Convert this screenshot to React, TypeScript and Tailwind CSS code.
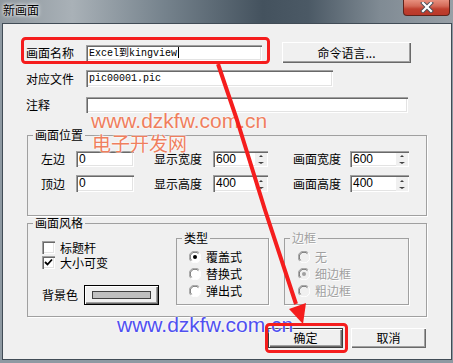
import React from 'react';

const cjk = { fontFamily: '"Noto Sans CJK SC", "Noto Sans", sans-serif' };
const mono = { fontFamily: '"Liberation Mono", monospace' };
const sans = { fontFamily: '"Liberation Sans", Arial, sans-serif' };

const sunken =
  'bg-white shadow-[inset_1px_1px_0_#a0a0a0,inset_2px_2px_0_#696969,inset_-1px_-1px_0_#ffffff,inset_-2px_-2px_0_#e3e3e3]';
const raised =
  'bg-[#f0f0f0] shadow-[inset_1px_1px_0_#ffffff,inset_-1px_-1px_0_#696969,inset_-2px_-2px_0_#a0a0a0]';

function Label({ text, w }: { text: string; w: string }) {
  return (
    <span className={`${w} shrink-0 text-[12px] leading-[14px] text-black`} style={cjk}>
      {text}
    </span>
  );
}

function Spin({ value, w }: { value: string; w: string }) {
  return (
    <div className={`${w} h-full flex ${sunken}`}>
      <span className="flex-1 pl-[3px] pt-[2px] text-[12px] leading-[13px] text-black" style={sans}>
        {value}
      </span>
      <div className="w-[12px] mt-[2px] mb-[1px] mr-[1px] flex flex-col bg-[#f0f0f0]">
        <div className="flex-1 flex items-center justify-center">
          <div className="w-0 h-0 border-x-[2px] border-x-transparent border-b-[2px] border-b-[#404040]" />
        </div>
        <div className="flex-1 flex items-center justify-center">
          <div className="w-0 h-0 border-x-[3px] border-x-transparent border-t-[2px] border-t-[#404040]" />
        </div>
      </div>
    </div>
  );
}

function Check({ label, checked }: { label: string; checked?: boolean }) {
  return (
    <div className="flex items-center h-[13px]">
      <div className={`w-[13px] h-[13px] ${sunken} flex items-center justify-center`}>
        {checked && (
          <svg width="9" height="9" viewBox="0 0 9 9">
            <path d="M1 4 L3.5 6.5 L8 1.5" stroke="#000" strokeWidth="1.8" fill="none" />
          </svg>
        )}
      </div>
      <span className="ml-[5px] text-[12px] leading-[13px]" style={cjk}>
        {label}
      </span>
    </div>
  );
}

function Radio({ label, on, disabled }: { label: string; on?: boolean; disabled?: boolean }) {
  return (
    <div className="flex items-center h-[16px]">
      <svg width="12" height="12" viewBox="0 0 12 12">
        <circle cx="6" cy="6" r="5.5" fill={disabled ? '#f0f0f0' : '#ffffff'} />
        <path d="M1.8 10.2 A5.5 5.5 0 0 1 10.2 1.8" stroke="#a0a0a0" strokeWidth="1" fill="none" />
        <path d="M2.6 9.4 A4.5 4.5 0 0 1 9.4 2.6" stroke="#696969" strokeWidth="1" fill="none" />
        <path d="M10.2 1.8 A5.5 5.5 0 0 1 1.8 10.2" stroke="#ffffff" strokeWidth="1" fill="none" />
        {on && <circle cx="6" cy="6" r="2" fill={disabled ? '#a0a0a0' : '#000000'} />}
      </svg>
      <span
        className={`ml-[5px] text-[12px] leading-[14px] ${
          disabled ? 'text-[#a0a0a0] [text-shadow:1px_1px_0_#ffffff]' : 'text-black'
        }`}
        style={cjk}
      >
        {label}
      </span>
    </div>
  );
}

function Group({
  title,
  className,
  disabled,
  children,
}: {
  title: string;
  className: string;
  disabled?: boolean;
  children: React.ReactNode;
}) {
  return (
    <fieldset className={`${className} border border-[#a0a0a0] shadow-[1px_1px_0_#ffffff]`}>
      <legend
        className={`ml-[5px] px-[2px] text-[12px] leading-[14px] ${
          disabled ? 'text-[#a0a0a0] [text-shadow:1px_1px_0_#ffffff]' : 'text-black'
        }`}
        style={cjk}
      >
        {title}
      </legend>
      {children}
    </fieldset>
  );
}

export default function App() {
  return (
    <div className="relative w-[453px] h-[363px] overflow-hidden bg-[#8e99a2] flex flex-col">
      {/* title bar */}
      <div className="h-[23px] shrink-0 flex items-start justify-between bg-[linear-gradient(to_right,#8f989f_0%,#a9b1b7_16%,#76838d_36%,#44525e_58%,#4b5965_68%,#808b94_84%,#979fa6_100%)]">
        <span
          className="ml-[3px] mt-[3px] text-[12px] leading-[14px] text-black [text-shadow:0_0_5px_#ffffff,0_0_3px_#ffffff]"
          style={cjk}
        >
          新画面
        </span>
        <div className="mr-[3px] w-[47px] h-[16px] rounded-b-[4px] border border-t-0 border-[#5e231b] bg-[linear-gradient(to_bottom,#e7907f_0%,#d46a58_40%,#c0402f_60%,#b9382a_100%)] flex items-center justify-center">
          <svg width="14" height="11" viewBox="0 0 14 11">
            <path d="M3 1 L11 9 M11 1 L3 9" stroke="#4a4f58" strokeWidth="4" strokeLinecap="square" />
            <path d="M3 1 L11 9 M11 1 L3 9" stroke="#ffffff" strokeWidth="2.2" strokeLinecap="square" />
          </svg>
        </div>
      </div>

      {/* client area */}
      <div className="ml-[2px] w-[450px] h-[337px] shrink-0 border border-[#414c56] bg-[#f0f0f0] flex flex-col">
        <div className="mt-[18px] pl-[23px] h-[21px] flex items-center">
          <Label text="画面名称" w="w-[60px]" />
          <div className={`w-[176px] h-[16px] ${sunken} flex items-center pl-[3px]`}>
            <span className="text-[10px] leading-[12px] text-black" style={mono}>
              Excel<span style={cjk}>到</span>kingview
            </span>
            <span className="ml-[1px] w-[1px] h-[11px] bg-black" />
          </div>
          <button
            className={`ml-[20px] w-[129px] h-[21px] ${raised} text-[12px] leading-[14px] text-black`}
            style={cjk}
          >
            命令语言...
          </button>
        </div>

        <div className="mt-[7px] pl-[23px] h-[17px] flex items-center">
          <Label text="对应文件" w="w-[60px]" />
          <div className={`w-[247px] h-[17px] ${sunken} flex items-center pl-[3px]`}>
            <span className="text-[10px] leading-[12px] text-black" style={mono}>
              pic00001.pic
            </span>
          </div>
        </div>

        <div className="mt-[10px] pl-[23px] h-[16px] flex items-center">
          <Label text="注释" w="w-[60px]" />
          <div className={`w-[322px] h-[16px] ${sunken}`} />
        </div>

        <Group title="画面位置" className="mt-[15px] ml-[24px] w-[400px] h-[88px]">
          <div className="mt-[9px] pl-[13px] h-[16px] flex items-center">
            <Label text="左边" w="w-[35px]" />
            <div className={`w-[58px] h-full ${sunken} pl-[3px] pt-[2px] text-[12px] leading-[13px]`} style={sans}>
              0
            </div>
            <span className="w-[20px]" />
            <Label text="显示宽度" w="w-[59px]" />
            <Spin value="600" w="w-[55px]" />
            <span className="w-[25px]" />
            <Label text="画面宽度" w="w-[57px]" />
            <Spin value="600" w="w-[59px]" />
          </div>
          <div className="mt-[8px] pl-[13px] h-[17px] flex items-center">
            <Label text="顶边" w="w-[35px]" />
            <div className={`w-[58px] h-full ${sunken} pl-[3px] pt-[2px] text-[12px] leading-[13px]`} style={sans}>
              0
            </div>
            <span className="w-[20px]" />
            <Label text="显示高度" w="w-[59px]" />
            <Spin value="400" w="w-[55px]" />
            <span className="w-[25px]" />
            <Label text="画面高度" w="w-[57px]" />
            <Spin value="400" w="w-[59px]" />
          </div>
        </Group>

        <Group title="画面风格" className="ml-[24px] w-[400px] h-[101px]">
          <div className="mt-[1px] flex items-start">
            <div className="w-[148px] pl-[14px] flex flex-col">
              <div className="mt-[10px]">
                <Check label="标题杆" />
              </div>
              <div className="mt-[2px]">
                <Check label="大小可变" checked />
              </div>
              <div className="mt-[16px] flex items-center h-[20px]">
                <Label text="背景色" w="w-[42px]" />
                <div className={`w-[75px] h-[20px] border border-black ${raised} flex items-center justify-center`}>
                  <div className="w-[59px] h-[8px] bg-[#c0c0c0] border border-[#404040]" />
                </div>
              </div>
            </div>
            <Group title="类型" className="w-[93px] h-[74px]">
              <div className="mt-[4px] pl-[12px] flex flex-col gap-[1px]">
                <Radio label="覆盖式" on />
                <Radio label="替换式" />
                <Radio label="弹出式" />
              </div>
            </Group>
            <Group title="边框" className="ml-[15px] w-[125px] h-[74px]" disabled>
              <div className="mt-[4px] pl-[13px] flex flex-col gap-[1px]">
                <Radio label="无" disabled />
                <Radio label="细边框" on disabled />
                <Radio label="粗边框" disabled />
              </div>
            </Group>
          </div>
        </Group>

        <div className="mt-[11px] pr-[25px] flex justify-end gap-[8px]">
          <button
            className={`w-[75px] h-[20px] border border-[#3c3c3c] ${raised} text-[12px] leading-[14px] text-black`}
            style={cjk}
          >
            确定
          </button>
          <button className={`w-[75px] h-[20px] ${raised} text-[12px] leading-[14px] text-black`} style={cjk}>
            取消
          </button>
        </div>
      </div>

      {/* watermarks */}
      <span
        className="absolute left-[91px] top-[111px] text-[21px] leading-[20px] text-[#ef7f5e] [text-shadow:0_0_2px_#ffffff,0_0_2px_#ffffff] whitespace-nowrap"
        style={sans}
      >
        www.dzkfw.com.cn
      </span>
      <span
        className="absolute left-[92px] top-[133px] text-[19px] leading-[19px] text-[#ef7f5e] [text-shadow:0_0_2px_#ffffff,0_0_2px_#ffffff] whitespace-nowrap"
        style={cjk}
      >
        电子开发网
      </span>
      <span
        className="absolute left-[117px] top-[314px] text-[21px] leading-[21px] text-[#5050f0] [text-shadow:0_0_2px_#ffffff,0_0_2px_#ffffff] whitespace-nowrap"
        style={sans}
      >
        www.dzkfw.com.cn
      </span>

      {/* red annotations */}
      <svg className="absolute left-0 top-0 pointer-events-none" width="453" height="363" viewBox="0 0 453 363">
        <rect x="22.5" y="38.5" width="246" height="24" rx="3" fill="none" stroke="#f51d1d" strokeWidth="3" />
        <rect x="266.5" y="324.5" width="80" height="27" rx="3" fill="none" stroke="#f51d1d" strokeWidth="3" />
        <polyline
          points="218,64 237,120 265,210 296,304"
          fill="none"
          stroke="#f51d1d"
          strokeWidth="4"
          strokeLinejoin="round"
        />
        <polygon points="303,324 289,309 306,303" fill="#f51d1d" />
      </svg>
    </div>
  );
}
